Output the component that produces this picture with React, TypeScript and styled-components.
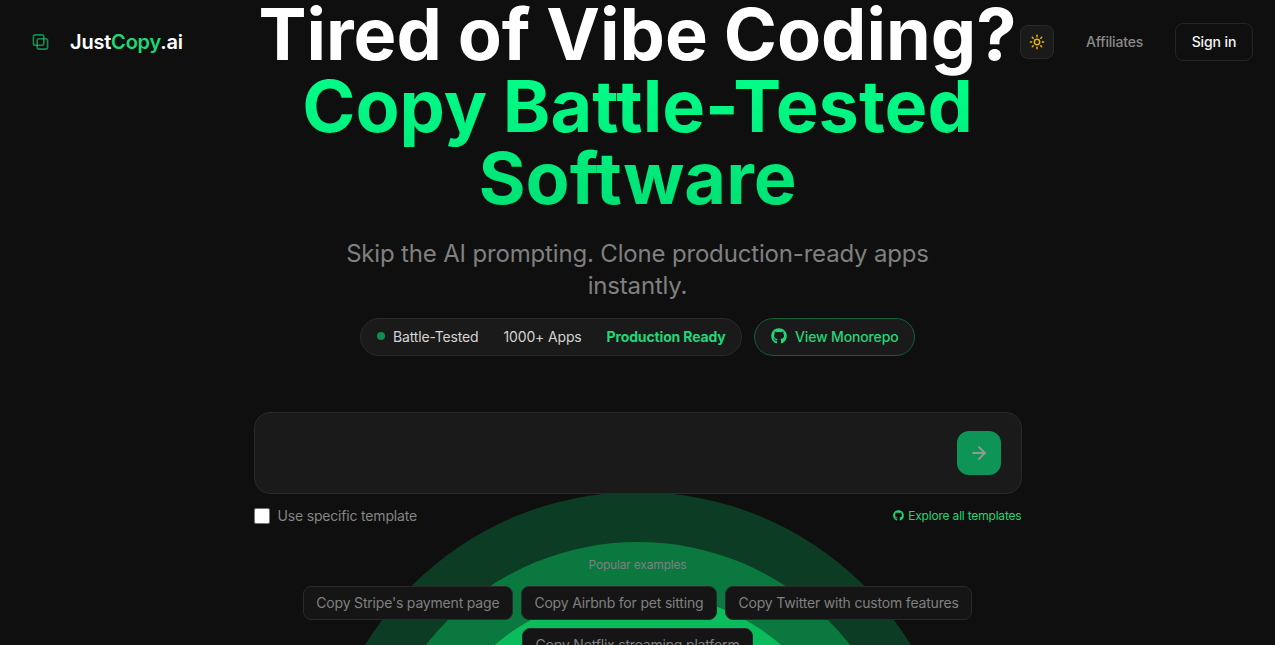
import React from "react";
import styled, { createGlobalStyle } from "styled-components";
import { ArrowRight, Sun } from "lucide-react";
import { FaGithub } from "react-icons/fa";

const GlobalStyle = createGlobalStyle`
  html, body {
    margin: 0;
    padding: 0;
    background: #0f0f0f;
    font-family: "Inter", "Liberation Sans", sans-serif;
    overflow: hidden;
  }
  * { box-sizing: border-box; }
`;

const Page = styled.div`
  position: relative;
  width: 100%;
  height: 645px;
  overflow: hidden;
  background: #0f0f0f;
`;

const Ring = styled.div<{ $size: number; $color: string }>`
  position: absolute;
  left: 50%;
  top: ${(p) => 812 - p.$size / 2}px;
  width: ${(p) => p.$size}px;
  height: ${(p) => p.$size}px;
  margin-left: ${(p) => -p.$size / 2}px;
  border-radius: 50%;
  background: ${(p) => p.$color};
`;

const Header = styled.header`
  position: absolute;
  top: 23px;
  left: 0;
  right: 0;
  z-index: 3;
  display: flex;
  align-items: center;
  justify-content: space-between;
  padding: 0 22px 0 32px;
  height: 38px;
`;

const Brand = styled.div`
  display: flex;
  align-items: center;
  gap: 21px;
  font-size: 20px;
  font-weight: 600;
  letter-spacing: -0.2px;
  color: #fff;
`;

const Accent = styled.span`
  color: #1ed877;
`;

const Nav = styled.nav`
  display: flex;
  align-items: center;
`;

const ThemeButton = styled.button`
  width: 34px;
  height: 34px;
  display: flex;
  align-items: center;
  justify-content: center;
  padding: 0;
  margin-right: 32px;
  background: #1a1a1a;
  border: 1px solid #2a2a2a;
  border-radius: 8px;
  color: #eab308;
`;

const NavLink = styled.a`
  padding-bottom: 2px;
  font-size: 14px;
  font-weight: 500;
  letter-spacing: -0.2px;
  color: #8a8a8a;
  margin-right: 32px;
`;

const SignIn = styled.button`
  height: 38px;
  width: 78px;
  padding: 0 0 2px;
  font: 500 14px "Inter", sans-serif;
  letter-spacing: -0.1px;
  color: #f5f5f5;
  background: #0f0f0f;
  border: 1px solid #252525;
  border-radius: 8px;
`;

const Main = styled.main`
  position: relative;
  z-index: 2;
  display: flex;
  flex-direction: column;
  align-items: center;
  margin-top: -2px;
`;

const Title = styled.h1`
  margin: 0;
  max-width: 768px;
  font-size: 72px;
  line-height: 72px;
  font-weight: 700;
  word-spacing: -1.2px;
  text-align: center;
  color: #fff;
`;

const TitleGreen = styled.span`
  display: block;
  background: linear-gradient(180deg, #00ff88, #00e074);
  -webkit-background-clip: text;
  background-clip: text;
  color: transparent;
`;

const Subtitle = styled.p`
  margin: 24px 0 0;
  max-width: 672px;
  font-size: 24px;
  line-height: 32px;
  letter-spacing: -0.17px;
  text-align: center;
  color: #808080;
`;

const BadgeRow = styled.div`
  display: flex;
  align-items: center;
  gap: 12px;
  margin-top: 16px;
`;

const StatusPill = styled.div`
  display: flex;
  align-items: center;
  gap: 25px;
  height: 38px;
  padding: 0 15.5px 2px 16px;
  border: 1px solid #2a2a2a;
  border-radius: 19px;
  background: #1a1a1a;
  font-size: 14px;
  letter-spacing: -0.15px;
  color: #e0e0e0;
`;

const StatusItem = styled.span<{ $strong?: boolean }>`
  display: flex;
  align-items: center;
  gap: 8px;
  font-weight: ${(p) => (p.$strong ? 700 : 400)};
  color: ${(p) => (p.$strong ? "#1ed877" : "#d4d4d4")};
`;

const Dot = styled.i`
  width: 8px;
  height: 8px;
  border-radius: 50%;
  background: #138a52;
`;

const RepoPill = styled.a`
  display: flex;
  align-items: center;
  gap: 8px;
  height: 38px;
  padding: 0 15.5px 2px 16px;
  border: 1px solid #11603a;
  border-radius: 19px;
  background: #1a1a1a;
  font-size: 14px;
  font-weight: 500;
  letter-spacing: -0.15px;
  color: #1ed877;
`;

const Composer = styled.div`
  display: flex;
  align-items: center;
  justify-content: flex-end;
  width: 768px;
  height: 82px;
  margin-top: 56px;
  padding: 0 20px;
  background: #1a1a1a;
  border: 1px solid #2a2a2a;
  border-radius: 16px;
`;

const SendButton = styled.button`
  width: 44px;
  height: 44px;
  display: flex;
  align-items: center;
  justify-content: center;
  padding: 0;
  border: none;
  border-radius: 12px;
  background: #0e9457;
  color: #8c9c93;
`;

const OptionRow = styled.div`
  display: flex;
  align-items: center;
  justify-content: space-between;
  width: 768px;
  margin-top: 13px;
`;

const CheckLabel = styled.label`
  display: flex;
  align-items: center;
  gap: 8px;
  font-size: 14px;
  letter-spacing: -0.18px;
  color: #858585;
`;

const Check = styled.span`
  width: 16px;
  height: 16px;
  background: #fff;
  border: 1px solid #767676;
  border-radius: 2px;
`;

const TemplatesLink = styled.a`
  display: flex;
  align-items: center;
  gap: 4.5px;
  font-size: 12px;
  letter-spacing: -0.19px;
  color: #1ed877;
`;

const Examples = styled.section`
  display: flex;
  flex-direction: column;
  align-items: center;
  width: 768px;
  margin-top: 33px;
`;

const ExamplesLabel = styled.div`
  font-size: 12px;
  line-height: 16px;
  letter-spacing: -0.18px;
  color: #808080;
  margin-bottom: 13px;
`;

const Chips = styled.div`
  display: flex;
  flex-wrap: wrap;
  justify-content: center;
  gap: 8px;
`;

const Chip = styled.button`
  height: 34px;
  padding: 0 12.5px 2px;
  font: 400 14px "Inter", sans-serif;
  letter-spacing: -0.19px;
  color: #808080;
  background: #151515;
  border: 1px solid #2a2a2a;
  border-radius: 8px;
`;

const LogoIcon = () => (
  <svg width="17" height="18" viewBox="0 0 18 18" fill="none" stroke="#1ed877" strokeOpacity="0.6" strokeWidth="1.7">
    <rect x="1.5" y="1.5" width="11" height="11" rx="2" />
    <rect x="5.5" y="5.5" width="11" height="11" rx="2" />
  </svg>
);

const examples = [
  "Copy Stripe's payment page",
  "Copy Airbnb for pet sitting",
  "Copy Twitter with custom features",
  "Copy Netflix streaming platform",
];

const App = () => {
  return (
    <Page>
      <GlobalStyle />
      <Ring $size={640} $color="#0c3d24" />
      <Ring $size={540} $color="#0a783f" />
      <Ring $size={440} $color="#0abc5b" />
      <Header>
        <Brand>
          <LogoIcon />
          <span>
            Just<Accent>Copy</Accent>.ai
          </span>
        </Brand>
        <Nav>
          <ThemeButton aria-label="Toggle theme">
            <Sun size={16} strokeWidth={2.2} />
          </ThemeButton>
          <NavLink>Affiliates</NavLink>
          <SignIn>Sign in</SignIn>
        </Nav>
      </Header>
      <Main>
        <Title>
          Tired of Vibe Coding?
          <TitleGreen>Copy Battle-Tested Software</TitleGreen>
        </Title>
        <Subtitle>Skip the AI prompting. Clone production-ready apps instantly.</Subtitle>
        <BadgeRow>
          <StatusPill>
            <StatusItem>
              <Dot />
              Battle-Tested
            </StatusItem>
            <StatusItem>1000+ Apps</StatusItem>
            <StatusItem $strong>Production Ready</StatusItem>
          </StatusPill>
          <RepoPill>
            <FaGithub size={16} />
            View Monorepo
          </RepoPill>
        </BadgeRow>
        <Composer>
          <SendButton aria-label="Send">
            <ArrowRight size={20} strokeWidth={2.4} />
          </SendButton>
        </Composer>
        <OptionRow>
          <CheckLabel>
            <Check />
            Use specific template
          </CheckLabel>
          <TemplatesLink>
            <FaGithub size={11} />
            Explore all templates
          </TemplatesLink>
        </OptionRow>
        <Examples>
          <ExamplesLabel>Popular examples</ExamplesLabel>
          <Chips>
            {examples.map((text) => (
              <Chip key={text}>{text}</Chip>
            ))}
          </Chips>
        </Examples>
      </Main>
    </Page>
  );
};

export default App;
